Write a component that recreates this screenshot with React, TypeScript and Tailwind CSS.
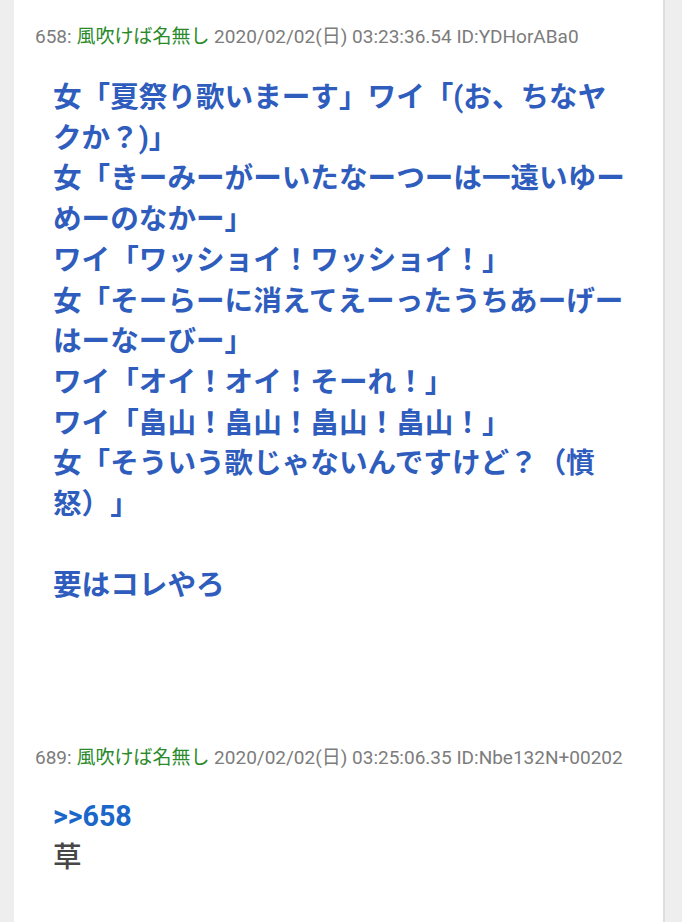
import React from 'react';

type Post = {
  no: number;
  name: string;
  date: string;
  id: string;
  anchor?: string;
  lines: string[];
  tone: 'blue' | 'gray';
};

const posts: Post[] = [
  {
    no: 658,
    name: '風吹けば名無し',
    date: '2020/02/02(日) 03:23:36.54',
    id: 'YDHorABa0',
    tone: 'blue',
    lines: [
      '女「夏祭り歌いまーす」ワイ「(お、ちなヤ',
      'クか？)」',
      '女「きーみーがーいたなーつーは一遠いゆー',
      'めーのなかー」',
      'ワイ「ワッショイ！ワッショイ！」',
      '女「そーらーに消えてえーったうちあーげー',
      'はーなーびー」',
      'ワイ「オイ！オイ！そーれ！」',
      'ワイ「畠山！畠山！畠山！畠山！」',
      '女「そういう歌じゃないんですけど？（憤',
      '怒）」',
      '',
      '要はコレやろ',
    ],
  },
  {
    no: 689,
    name: '風吹けば名無し',
    date: '2020/02/02(日) 03:25:06.35',
    id: 'Nbe132N+00202',
    tone: 'gray',
    anchor: '>>658',
    lines: ['草'],
  },
];

function PostHeader({ post }: { post: Post }) {
  return (
    <div className="pl-[21px] text-[19px] leading-[24px] text-[#7c7c7c] whitespace-nowrap">
      {post.no}: <span className="text-[#2a8a2a]">{post.name}</span> {post.date} ID:{post.id}
    </div>
  );
}

function PostBody({ post }: { post: Post }) {
  return (
    <div className="pl-[39px] text-[28.6px] leading-[40.7px] whitespace-nowrap [text-spacing-trim:space-all]">
      {post.anchor && <div className="font-bold text-[#1a66c9]">{post.anchor}</div>}
      {post.lines.map((line, i) => (
        <div
          key={i}
          className={
            post.tone === 'blue'
              ? 'font-bold text-[#2f5dbd] min-h-[40.7px]'
              : 'font-medium text-[#474747] min-h-[40.7px]'
          }
        >
          {line}
        </div>
      ))}
    </div>
  );
}

export default function App() {
  return (
    <div
      className="min-h-[922px] bg-[#eeeeee] flex"
      style={{ fontFamily: 'Roboto, "Noto Sans CJK JP", sans-serif' }}
    >
      <div className="ml-[14px] w-[651px] bg-white border-r-2 border-[#dedede] pt-[25px] pb-[40px] flex flex-col">
        <PostHeader post={posts[0]} />
        <div className="mt-[28px]">
          <PostBody post={posts[0]} />
        </div>
        <div className="mt-[140px]">
          <PostHeader post={posts[1]} />
        </div>
        <div className="mt-[26px]">
          <PostBody post={posts[1]} />
        </div>
      </div>
    </div>
  );
}
